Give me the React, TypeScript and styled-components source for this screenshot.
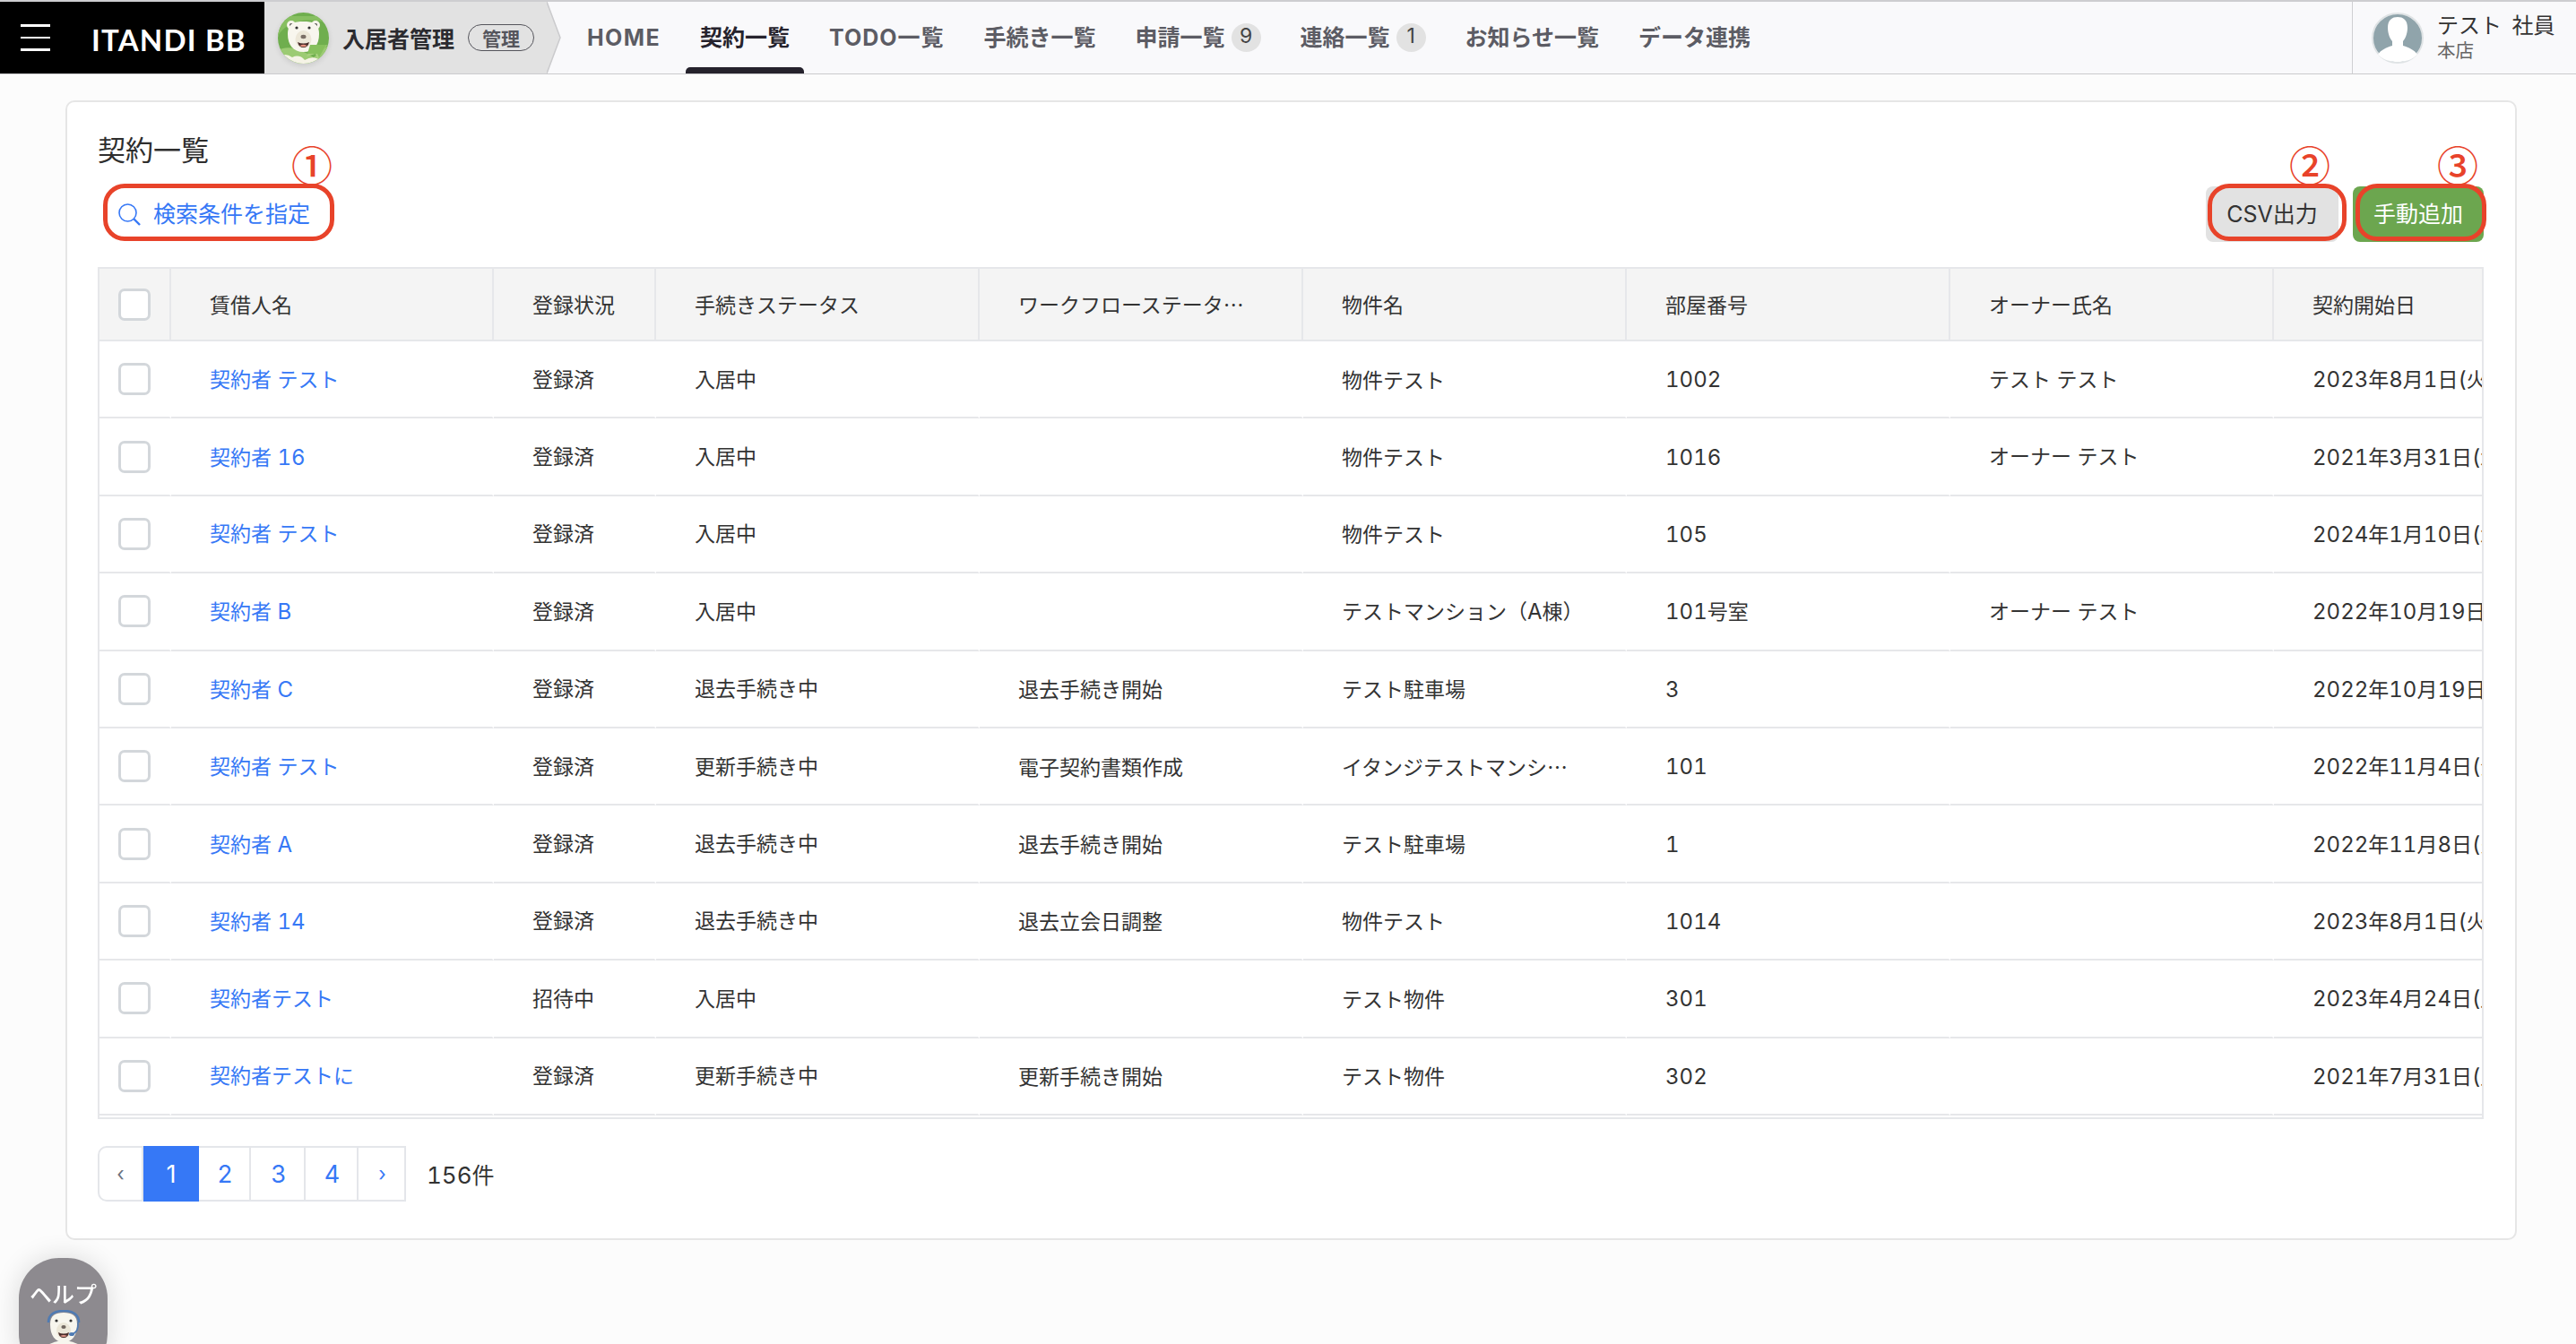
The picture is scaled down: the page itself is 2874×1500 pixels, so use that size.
import React from "react";
import styled, { createGlobalStyle } from "styled-components";

const SANS = `"Inter", "Noto Sans CJK JP", sans-serif`;
const CJK = `"Noto Sans CJK JP", "Inter", sans-serif`;
const RED = "#e8432a";
const BLUE = "#3678f6";

const Global = createGlobalStyle`
  html, body { margin: 0; padding: 0; height: 1500px; overflow: hidden; background: #fcfcfc; }
  body { font-family: ${SANS}; color: #333; }
  * { box-sizing: border-box; }
`;

const Header = styled.header`
  display: flex; height: 83px; border-top: 2px solid #cdcdd0; border-bottom: 1px solid #cbcbcd; background: #f9f9fb;
`;
const Brand = styled.div`
  display: flex; align-items: center; width: 295px; background: #000; padding-left: 23px; gap: 46px;
`;
const Burger = styled.div`
  display: flex; flex-direction: column; gap: 11px; width: 33px;
  span { display: block; height: 2.5px; background: #fff; }
`;
const Wordmark = styled.div`
  color: #fff; font: 700 33px/1 "Lato", sans-serif; letter-spacing: 1.2px; white-space: nowrap; padding-top: 4px;
`;
const Product = styled.div`
  display: flex; align-items: center; width: 315px; padding-left: 15px; background: #e2e2e2;
`;
const LogoFrame = styled.div`
  width: 57px; height: 57px; border-radius: 50%; overflow: hidden; flex: none; box-shadow: 0 2px 6px rgba(0,0,0,.12);
  svg { display: block; }
`;
const ProductName = styled.div`
  font: 700 25px/1 ${CJK}; color: #2b2b30; margin-left: 15px; white-space: nowrap;
`;
const Pill = styled.div`
  display: flex; align-items: center; justify-content: center; width: 74px; height: 30px; margin-left: 15px;
  border: 1.5px solid #55555c; border-radius: 15px; font: 700 21px/1 ${CJK}; color: #55555c;
`;
const Tip = styled.svg`
  display: block; width: 16px; height: 80px; flex: none;
`;
const Nav = styled.nav`
  display: flex; align-items: stretch; margin-left: 13px; gap: 12px;
`;
const NavItem = styled.div<{ $active?: boolean; $track?: number }>`
  position: relative; display: flex; align-items: center; padding: 0 16px;
  font: 700 25px/1 ${SANS}; color: ${(p) => (p.$active ? "#26232d" : "#5c5c64")};
  white-space: nowrap; letter-spacing: ${(p) => p.$track ?? 0}px;
  ${(p) => p.$active && `&::after { content: ""; position: absolute; left: 0; right: 0; bottom: 0; height: 7px; background: #25222c; border-radius: 5px 5px 0 0; }`}
`;
const Count = styled.span`
  display: flex; justify-content: center; width: 33px; height: 32px; margin-left: 7px; padding-top: 2px;
  border-radius: 50%; background: #e2e2e2; color: #444; font: 400 23px/1.1 ${SANS};
`;
const User = styled.div`
  display: flex; align-items: center; margin-left: auto; width: 250px; border-left: 1.5px solid #cfcfd2; padding-left: 21px;
`;
const Who = styled.div`
  margin-left: 15px; margin-top: -5px; display: flex; flex-direction: column; gap: 3px;
  b { font: 400 24px/28px ${CJK}; color: #333; white-space: nowrap; word-spacing: 6px; }
  small { font: 400 20.5px/22px ${CJK}; color: #666; }
`;
const Page = styled.main`
  padding: 29px 66px 0 73px;
`;
const Card = styled.section`
  height: 1272px; padding: 34px 35px 0 34px; background: #fff; border: 2px solid #e6e6e6; border-radius: 10px;
`;
const Title = styled.h1`
  margin: 0; height: 40px; font: 400 31px/36px ${CJK}; color: #2e2e2e;
`;
const Toolbar = styled.div`
  display: flex; justify-content: space-between; align-items: stretch; height: 62px; margin-top: 20px;
`;
const Actions = styled.div`
  display: flex; gap: 16px;
`;
const SearchButton = styled.div`
  position: relative; display: flex; align-items: center; gap: 14px; width: 260px; padding: 0 0 3px 23px;
  color: ${BLUE}; font: 400 25px/1 ${CJK}; white-space: nowrap;
`;
const ActionButton = styled.div<{ $primary?: boolean }>`
  position: relative; display: flex; align-items: center; justify-content: center; width: ${(p) => (p.$primary ? 146 : 148)}px;
  border-radius: 8px; background: ${(p) => (p.$primary ? "#6ca64f" : "#e2e2e2")}; color: ${(p) => (p.$primary ? "#fff" : "#333")};
  font: 400 25px/1 ${SANS}; white-space: nowrap;
`;
const Ring = styled.i<{ $l: number; $r: number }>`
  position: absolute; top: -3px; bottom: 1px; left: ${(p) => p.$l}px; right: ${(p) => p.$r}px;
  border: 5px solid ${RED}; border-radius: 24px;
`;
const Mark = styled.i<{ $l: number }>`
  position: absolute; top: -49px; left: ${(p) => p.$l}px; font: 500 46px/46px ${CJK}; color: ${RED};
`;
const TableFrame = styled.div`
  margin-top: 28px; height: 951px; overflow: hidden; border: 2px solid #e6e7ea;
`;
const Table = styled.table`
  table-layout: fixed; border-collapse: separate; border-spacing: 0; width: 2658px;
`;
const Th = styled.th`
  height: 81px; padding: 4px 46px 0 43px; background: #f4f4f4; border-right: 2px solid #e6e7ea; border-bottom: 2px solid #e6e7ea;
  font: 400 23px/1 ${SANS}; color: #333; text-align: left; white-space: nowrap; overflow: hidden; text-overflow: ellipsis;
  &:nth-child(5), &:nth-child(6) { font-family: ${CJK}; padding-top: 0; }
  &:nth-child(3) { padding-right: 0; }
  &:last-child { border-right: 0; padding-right: 0; }
`;
const Td = styled.td`
  height: 86.4px; padding: 2px 46px 0 43px; background: #fff; border-right: 2px solid #fff; border-bottom: 2px solid #e6e7ea;
  font: 400 23px/1 ${SANS}; color: #333; white-space: nowrap; overflow: hidden; text-overflow: ellipsis;
  &:nth-child(5), &:nth-child(6) { font-family: ${CJK}; padding-top: 0; }
  &:nth-child(3) { padding-right: 0; }
  &:last-child { border-right: 0; padding-right: 0; text-overflow: clip; }
`;
const Num = styled.span`
  font-family: "Inter", sans-serif; font-size: 24px; font-variant-numeric: tabular-nums;
`;
const BoxCell = styled(Td)`
  padding: 0; text-align: center;
`;
const BoxHead = styled(Th)`
  padding: 0; text-align: center;
`;
const Check = styled.span`
  display: block; width: 36px; height: 36px; margin: 0 auto; background: #fff; border: 3.5px solid #d3d7db; border-radius: 7px;
`;
const NameLink = styled.a`
  color: ${BLUE}; text-decoration: none;
`;
const Footer = styled.div`
  display: flex; align-items: center; margin-top: 30px; height: 62px;
`;
const Pager = styled.div`
  display: flex; height: 62px;
`;
const PageCell = styled.div<{ $w: number; $active?: boolean; $muted?: boolean; $first?: boolean; $small?: boolean }>`
  display: flex; align-items: center; justify-content: center; width: ${(p) => p.$w}px; padding-left: ${(p) => (p.$active || p.$first ? 0 : 2)}px;
  border: 2px solid ${(p) => (p.$active ? BLUE : "#e4e6ea")}; border-left-width: ${(p) => (p.$first || p.$active ? 2 : 0)}px;
  border-radius: ${(p) => (p.$first ? "10px 0 0 10px" : 0)};
  background: ${(p) => (p.$active ? BLUE : "#fff")};
  color: ${(p) => (p.$active ? "#fff" : p.$muted ? "#6b7280" : BLUE)};
  font: 400 ${(p) => (p.$small ? 22 : 27)}px/1 ${SANS};
`;
const Total = styled.div`
  margin-left: 23px; padding-top: 3px; font: 400 25px/1 ${SANS}; color: #333;
  span { font-size: 26px; font-variant-numeric: tabular-nums; }
`;
const Help = styled.div`
  position: fixed; left: 21px; top: 1404px; width: 99px; height: 130px; padding-top: 27px; border-radius: 45px;
  display: flex; flex-direction: column; align-items: center; overflow: hidden;
  background: #8d8a8f; box-shadow: 0 0 30px rgba(0,0,0,.14); color: #fff; font: 500 25px/1 ${CJK};
  svg { display: block; margin-top: 6px; flex: none; }
`;

const TenantLogo = () => (
  <svg width="57" height="57" viewBox="0 0 57 57">
    <rect width="57" height="57" fill="#6fae4e" />
    <path d="M0 26 C10 10 30 4 57 12 L57 4 L0 4Z" fill="#87bf61" />
    <path d="M0 42 C12 36 24 40 40 50 L57 36 L57 57 L0 57Z" fill="#9ccb73" />
    <path d="M38 38 L55 36 L44 52 L42 46 L32 49Z" fill="#a9d27f" />
    <circle cx="15" cy="14" r="5" fill="#f7f5ec" />
    <circle cx="42" cy="14" r="5" fill="#f7f5ec" />
    <circle cx="15" cy="14" r="2" fill="#4a4a4a" />
    <circle cx="42" cy="14" r="2" fill="#4a4a4a" />
    <path d="M11 24 C11 12 18 10 28.5 10 C39 10 46 12 46 24 C46 36 40 44 28.5 44 C17 44 11 36 11 24Z" fill="#f8f6ee" />
    <ellipse cx="28.5" cy="30" rx="9" ry="10" fill="#ece7d8" />
    <circle cx="21" cy="17" r="1.6" fill="#333" />
    <circle cx="35" cy="17" r="1.6" fill="#333" />
    <ellipse cx="28.5" cy="27" rx="3" ry="2.2" fill="#7a6f66" />
    <path d="M22 33 Q28.5 36 35 33 Q33.5 39 28.5 39 Q23.5 39 22 33Z" fill="#4a2c2a" />
    <path d="M24.5 37 Q28.5 34.5 32.5 37 Q28.5 39.5 24.5 37Z" fill="#e7907f" />
    <path d="M36 36 L54 36 L46 50 L44 46 L33 46Z" fill="#86c05c" />
    <path d="M0 50 Q8 44 16 50 Q24 46 30 53 Q40 47 48 54 L48 57 L0 57Z" fill="#f5f3e6" />
  </svg>
);

const HelpBear = () => (
  <svg width="40" height="44" viewBox="0 0 40 44">
    <path d="M3 14 C3 5 10 1 20 1 C30 1 37 5 37 14" fill="none" stroke="#4f7bb3" strokeWidth="2.6" />
    <path d="M-2 42 Q20 26 42 42 L42 44 L-2 44Z" fill="#f7f6ee" />
    <path d="M5 16 C5 6 11 3 20 3 C29 3 35 6 35 16 C35 28 30 36 20 36 C10 36 5 28 5 16Z" fill="#f7f6ee" />
    <ellipse cx="20" cy="23" rx="8" ry="9" fill="#ebe7d8" />
    <circle cx="12" cy="12" r="1.6" fill="#333" />
    <circle cx="28" cy="12" r="1.6" fill="#333" />
    <ellipse cx="20" cy="19" rx="2.6" ry="1.9" fill="#6f665e" />
    <path d="M14 25 Q20 28 26 25 Q25 31 20 31 Q15 31 14 25Z" fill="#4a2c2a" />
    <path d="M16 29 Q20 27 24 29 Q20 31 16 29Z" fill="#e59a8c" />
    <path d="M36 14 Q37 24 30 27" fill="none" stroke="#4f7bb3" strokeWidth="1.6" />
    <ellipse cx="29" cy="27" rx="3" ry="2" fill="#4f7bb3" />
  </svg>
);

const SearchIcon = () => (
  <svg width="25" height="25" viewBox="0 0 25 25" fill="none" stroke={BLUE} style={{ marginTop: 3 }}>
    <circle cx="10.5" cy="10.5" r="9.5" strokeWidth="1.6" />
    <path d="M17.5 17.5 L24 24" strokeWidth="2.4" />
  </svg>
);

const AvatarIcon = () => (
  <svg width="58" height="57" viewBox="0 0 58 57" style={{ flex: "none" }}>
    <ellipse cx="29" cy="28.5" rx="28" ry="27.5" fill="#90a4ab" stroke="#dfe3e5" strokeWidth="2" />
    <path d="M18 17 C18 8 23 5 29 5 C35 5 40 8 40 17 C40 24 37 30 35 32 L35 37 C42 39 48 42 51 47 C45 53 37 55 29 55 C21 55 13 53 7 47 C10 42 16 39 23 37 L23 32 C21 30 18 24 18 17Z" fill="#fff" />
  </svg>
);

const columns = ["賃借人名", "登録状況", "手続きステータス", "ワークフローステータ…", "物件名", "部屋番号", "オーナー氏名", "契約開始日"];
const widths = [80, 360, 181, 361, 361, 361, 361, 361, 232];
const rows = [
  ["契約者 テスト", "登録済", "入居中", "", "物件テスト", "1002", "テスト テスト", "2023年8月1日(火)"],
  ["契約者 16", "登録済", "入居中", "", "物件テスト", "1016", "オーナー テスト", "2021年3月31日(水)"],
  ["契約者 テスト", "登録済", "入居中", "", "物件テスト", "105", "", "2024年1月10日(水)"],
  ["契約者 B", "登録済", "入居中", "", "テストマンション（A棟）", "101号室", "オーナー テスト", "2022年10月19日(水)"],
  ["契約者 C", "登録済", "退去手続き中", "退去手続き開始", "テスト駐車場", "3", "", "2022年10月19日(水)"],
  ["契約者 テスト", "登録済", "更新手続き中", "電子契約書類作成", "イタンジテストマンション", "101", "", "2022年11月4日(金)"],
  ["契約者 A", "登録済", "退去手続き中", "退去手続き開始", "テスト駐車場", "1", "", "2022年11月8日(火)"],
  ["契約者 14", "登録済", "退去手続き中", "退去立会日調整", "物件テスト", "1014", "", "2023年8月1日(火)"],
  ["契約者テスト", "招待中", "入居中", "", "テスト物件", "301", "", "2023年4月24日(月)"],
  ["契約者テストに", "登録済", "更新手続き中", "更新手続き開始", "テスト物件", "302", "", "2021年7月31日(土)"],
];

const withNums = (text: string) =>
  text.split(/([0-9A-Za-z()]+)/).map((part, i) => (i % 2 ? <Num key={i}>{part}</Num> : part));

export default function App() {
  return (
    <>
      <Global />
      <Header>
        <Brand>
          <Burger><span /><span /><span /></Burger>
          <Wordmark>ITANDI BB</Wordmark>
        </Brand>
        <Product>
          <LogoFrame><TenantLogo /></LogoFrame>
          <ProductName>入居者管理</ProductName>
          <Pill>管理</Pill>
        </Product>
        <Tip viewBox="0 0 16 80">
          <path d="M0 0 L15 40 L0 80Z" fill="#e2e2e2" />
          <path d="M0 0 L15 40 L0 80" fill="none" stroke="#cbcbcd" strokeWidth="1.5" />
        </Tip>
        <Nav>
          <NavItem $track={1.4}>HOME</NavItem>
          <NavItem $active>契約一覧</NavItem>
          <NavItem $track={1}>TODO一覧</NavItem>
          <NavItem>手続き一覧</NavItem>
          <NavItem>申請一覧<Count>9</Count></NavItem>
          <NavItem>連絡一覧<Count>1</Count></NavItem>
          <NavItem>お知らせ一覧</NavItem>
          <NavItem>データ連携</NavItem>
        </Nav>
        <User>
          <AvatarIcon />
          <Who><b>テスト 社員</b><small>本店</small></Who>
        </User>
      </Header>
      <Page>
        <Card>
          <Title>契約一覧</Title>
          <Toolbar>
            <SearchButton>
              <SearchIcon />
              検索条件を指定
              <Ring $l={6} $r={-4} />
              <Mark $l={216}>①</Mark>
            </SearchButton>
            <Actions>
              <ActionButton>
                CSV出力
                <Ring $l={2} $r={-9} />
                <Mark $l={93}>②</Mark>
              </ActionButton>
              <ActionButton $primary>
                手動追加
                <Ring $l={3} $r={-3} />
                <Mark $l={94}>③</Mark>
              </ActionButton>
            </Actions>
          </Toolbar>
          <TableFrame>
            <Table>
              <colgroup>
                {widths.map((w, i) => <col key={i} width={w} />)}
              </colgroup>
              <thead>
                <tr>
                  <BoxHead><Check /></BoxHead>
                  {columns.map((c) => <Th key={c}>{c}</Th>)}
                </tr>
              </thead>
              <tbody>
                {rows.map((r, i) => (
                  <tr key={i}>
                    <BoxCell><Check /></BoxCell>
                    {r.map((v, j) => (
                      <Td key={j}>{j === 0 ? <NameLink>{withNums(v)}</NameLink> : withNums(v)}</Td>
                    ))}
                  </tr>
                ))}
              </tbody>
            </Table>
          </TableFrame>
          <Footer>
            <Pager>
              <PageCell $w={51} $first $muted $small>‹</PageCell>
              <PageCell $w={62} $active>1</PageCell>
              <PageCell $w={58}>2</PageCell>
              <PageCell $w={61}>3</PageCell>
              <PageCell $w={59}>4</PageCell>
              <PageCell $w={53} $small>›</PageCell>
            </Pager>
            <Total><span>156</span>件</Total>
          </Footer>
        </Card>
      </Page>
      <Help>
        ヘルプ
        <HelpBear />
      </Help>
    </>
  );
}
